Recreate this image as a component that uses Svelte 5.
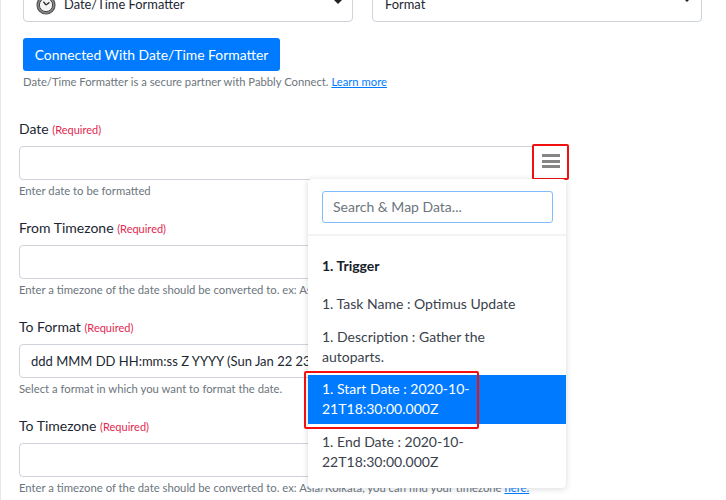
<script lang="ts">
  type Field = {
    label: string;
    help: string;
    value?: string;
    link?: boolean;
  };

  const timezoneHelp = 'Enter a timezone of the date should be converted to. ex: Asia/Kolkata, you can find your timezone';

  const fields: Field[] = [
    { label: 'From Timezone', help: timezoneHelp, link: true },
    { label: 'To Format', help: 'Select a format in which you want to format the date.', value: 'ddd MMM DD HH:mm:ss Z YYYY (Sun Jan 22 23:42:12 +0000 2020)' },
    { label: 'To Timezone', help: timezoneHelp, link: true },
  ];

  const items = [
    { text: '1. Task Name : Optimus Update', active: false },
    { text: '1. Description : Gather the autoparts.', active: false },
    { text: '1. Start Date : 2020-10-21T18:30:00.000Z', active: true },
    { text: '1. End Date : 2020-10-22T18:30:00.000Z', active: false },
  ];
</script>

<div class="page">
  <div class="selects">
    <div class="select">
      <svg class="clock" width="20" height="20" viewBox="0 0 20 20" aria-hidden="true">
        <circle cx="10" cy="10" r="9" fill="#8a8a8a" stroke="#555" stroke-width="1.2" />
        <circle cx="10" cy="10" r="6.6" fill="#f4f4f4" stroke="#444" stroke-width="1" />
        <path d="M10 10 L7.4 6.6 M10 10 L13.4 7.4" stroke="#333" stroke-width="1.4" fill="none" />
      </svg>
      <span>Date/Time Formatter</span>
      <i class="caret small"></i>
    </div>
    <div class="select">
      <span>Format</span>
      <i class="caret"></i>
    </div>
  </div>

  <button class="connected" type="button">Connected With Date/Time Formatter</button>
  <p class="partner">Date/Time Formatter is a secure partner with Pabbly Connect. <a href="#more">Learn more</a></p>

  <div class="field first">
    <div class="label">Date <small>(Required)</small></div>
    <div class="input"></div>
    <p class="help">Enter date to be formatted</p>

    <div class="map-btn">
      <span></span><span></span><span></span>
    </div>

    <div class="dropdown">
      <div class="search-wrap">
        <div class="search">Search &amp; Map Data...</div>
      </div>
      <div class="group">1. Trigger</div>
      {#each items as item}
        <div class="item" class:active={item.active}>
          {item.text}
          {#if item.active}<div class="callout"></div>{/if}
        </div>
      {/each}
    </div>
  </div>

  {#each fields as field}
    <div class="field">
      <div class="label">{field.label} <small>(Required)</small></div>
      <div class="input">{field.value ?? ''}</div>
      <p class="help">{field.help} {#if field.link}<a href="#here">here.</a>{/if}</p>
    </div>
  {/each}
</div>

<style>
  :global(body) {
    margin: 0;
    background: #fff;
    overflow: hidden;
  }

  .page {
    box-sizing: border-box;
    width: 726px;
    height: 500px;
    overflow: hidden;
    padding-left: 18px;
    border-left: 1px solid #e3e8ee;
    font-family: Lato, "Liberation Sans", sans-serif;
    color: #1c2733;
  }

  .selects {
    display: flex;
    gap: 19px;
    margin: -14px 0 0 4px;
  }

  .select {
    box-sizing: border-box;
    width: 330px;
    height: 36px;
    display: flex;
    align-items: center;
    gap: 8px;
    padding: 0 12px;
    border: 1px solid #ced4da;
    border-radius: 4px;
    font-size: 12.9px;
  }

  .select span {
    flex: 1;
  }

  .clock {
    margin-top: 2px;
  }

  .caret {
    border-left: 5px solid transparent;
    border-right: 5px solid transparent;
    border-top: 5px solid #222;
    margin: 0 -3px 9px 0;
  }

  .caret.small {
    border-left-width: 4px;
    border-right-width: 4px;
    border-top-width: 4px;
    margin: 0 -2px 4px 0;
  }

  .connected {
    display: block;
    width: 257px;
    height: 33px;
    margin: 16px 0 0 4px;
    padding: 0;
    border: 0;
    border-radius: 3px;
    background: #007bff;
    color: #fff;
    font: 13.9px Lato, "Liberation Sans", sans-serif;
  }

  .partner {
    margin: 4px 0 0 4px;
    font-size: 11.25px;
    line-height: 14px;
    color: #6c757d;
  }

  a {
    color: #007bff;
    text-decoration: underline;
  }

  .field {
    position: relative;
    width: 547px;
    height: 99px;
  }

  .field.first {
    margin-top: 31px;
  }

  .label {
    height: 26px;
    line-height: 18px;
    font-size: 14px;
  }

  .label small {
    font-size: 11px;
    color: #e3284f;
  }

  .input {
    box-sizing: border-box;
    height: 34px;
    padding: 0 11px;
    line-height: 32px;
    border: 1px solid #ced4da;
    border-radius: 4px;
    font-size: 13px;
    white-space: nowrap;
    overflow: hidden;
  }

  .help {
    margin: 4px 0 0;
    font-size: 11.3px;
    line-height: 14px;
    color: #6c757d;
    white-space: nowrap;
  }

  .map-btn {
    position: absolute;
    left: 513px;
    top: 24px;
    box-sizing: border-box;
    width: 37px;
    height: 36px;
    display: flex;
    flex-direction: column;
    align-items: center;
    justify-content: center;
    gap: 2.5px;
    padding-bottom: 2px;
    border: 2px solid #f01010;
    border-radius: 2px;
    background: #fff;
  }

  .map-btn span {
    width: 18px;
    height: 3px;
    background: #868686;
  }

  .dropdown {
    position: absolute;
    z-index: 2;
    left: 289px;
    top: 59px;
    box-sizing: border-box;
    width: 258px;
    height: 309px;
    background: #fff;
    border-radius: 4px;
    box-shadow: 0 1px 6px rgba(40, 50, 70, 0.18);
    font-size: 14px;
    color: #39424c;
  }

  .search-wrap {
    height: 57px;
    padding: 12px 13px 0 14px;
    box-sizing: border-box;
    border-bottom: 2px solid #f2f3f5;
  }

  .search {
    box-sizing: border-box;
    height: 32px;
    padding: 0 10px;
    line-height: 30px;
    border: 1px solid #80bdff;
    border-radius: 3px;
    color: #6c757d;
  }

  .group {
    box-sizing: border-box;
    height: 54px;
    padding: 20px 14px 0;
    line-height: 20px;
    font-weight: 700;
    color: #16202a;
  }

  .item {
    position: relative;
    box-sizing: border-box;
    padding: 4px 30px 5px 14px;
    margin-bottom: 3.5px;
    line-height: 20px;
  }

  .item.active {
    background: #007bff;
    color: #fff;
  }

  .callout {
    position: absolute;
    left: -4px;
    top: -4px;
    box-sizing: border-box;
    width: 175px;
    height: 58px;
    border: 2px solid #f01010;
    border-radius: 2px;
  }
</style>
